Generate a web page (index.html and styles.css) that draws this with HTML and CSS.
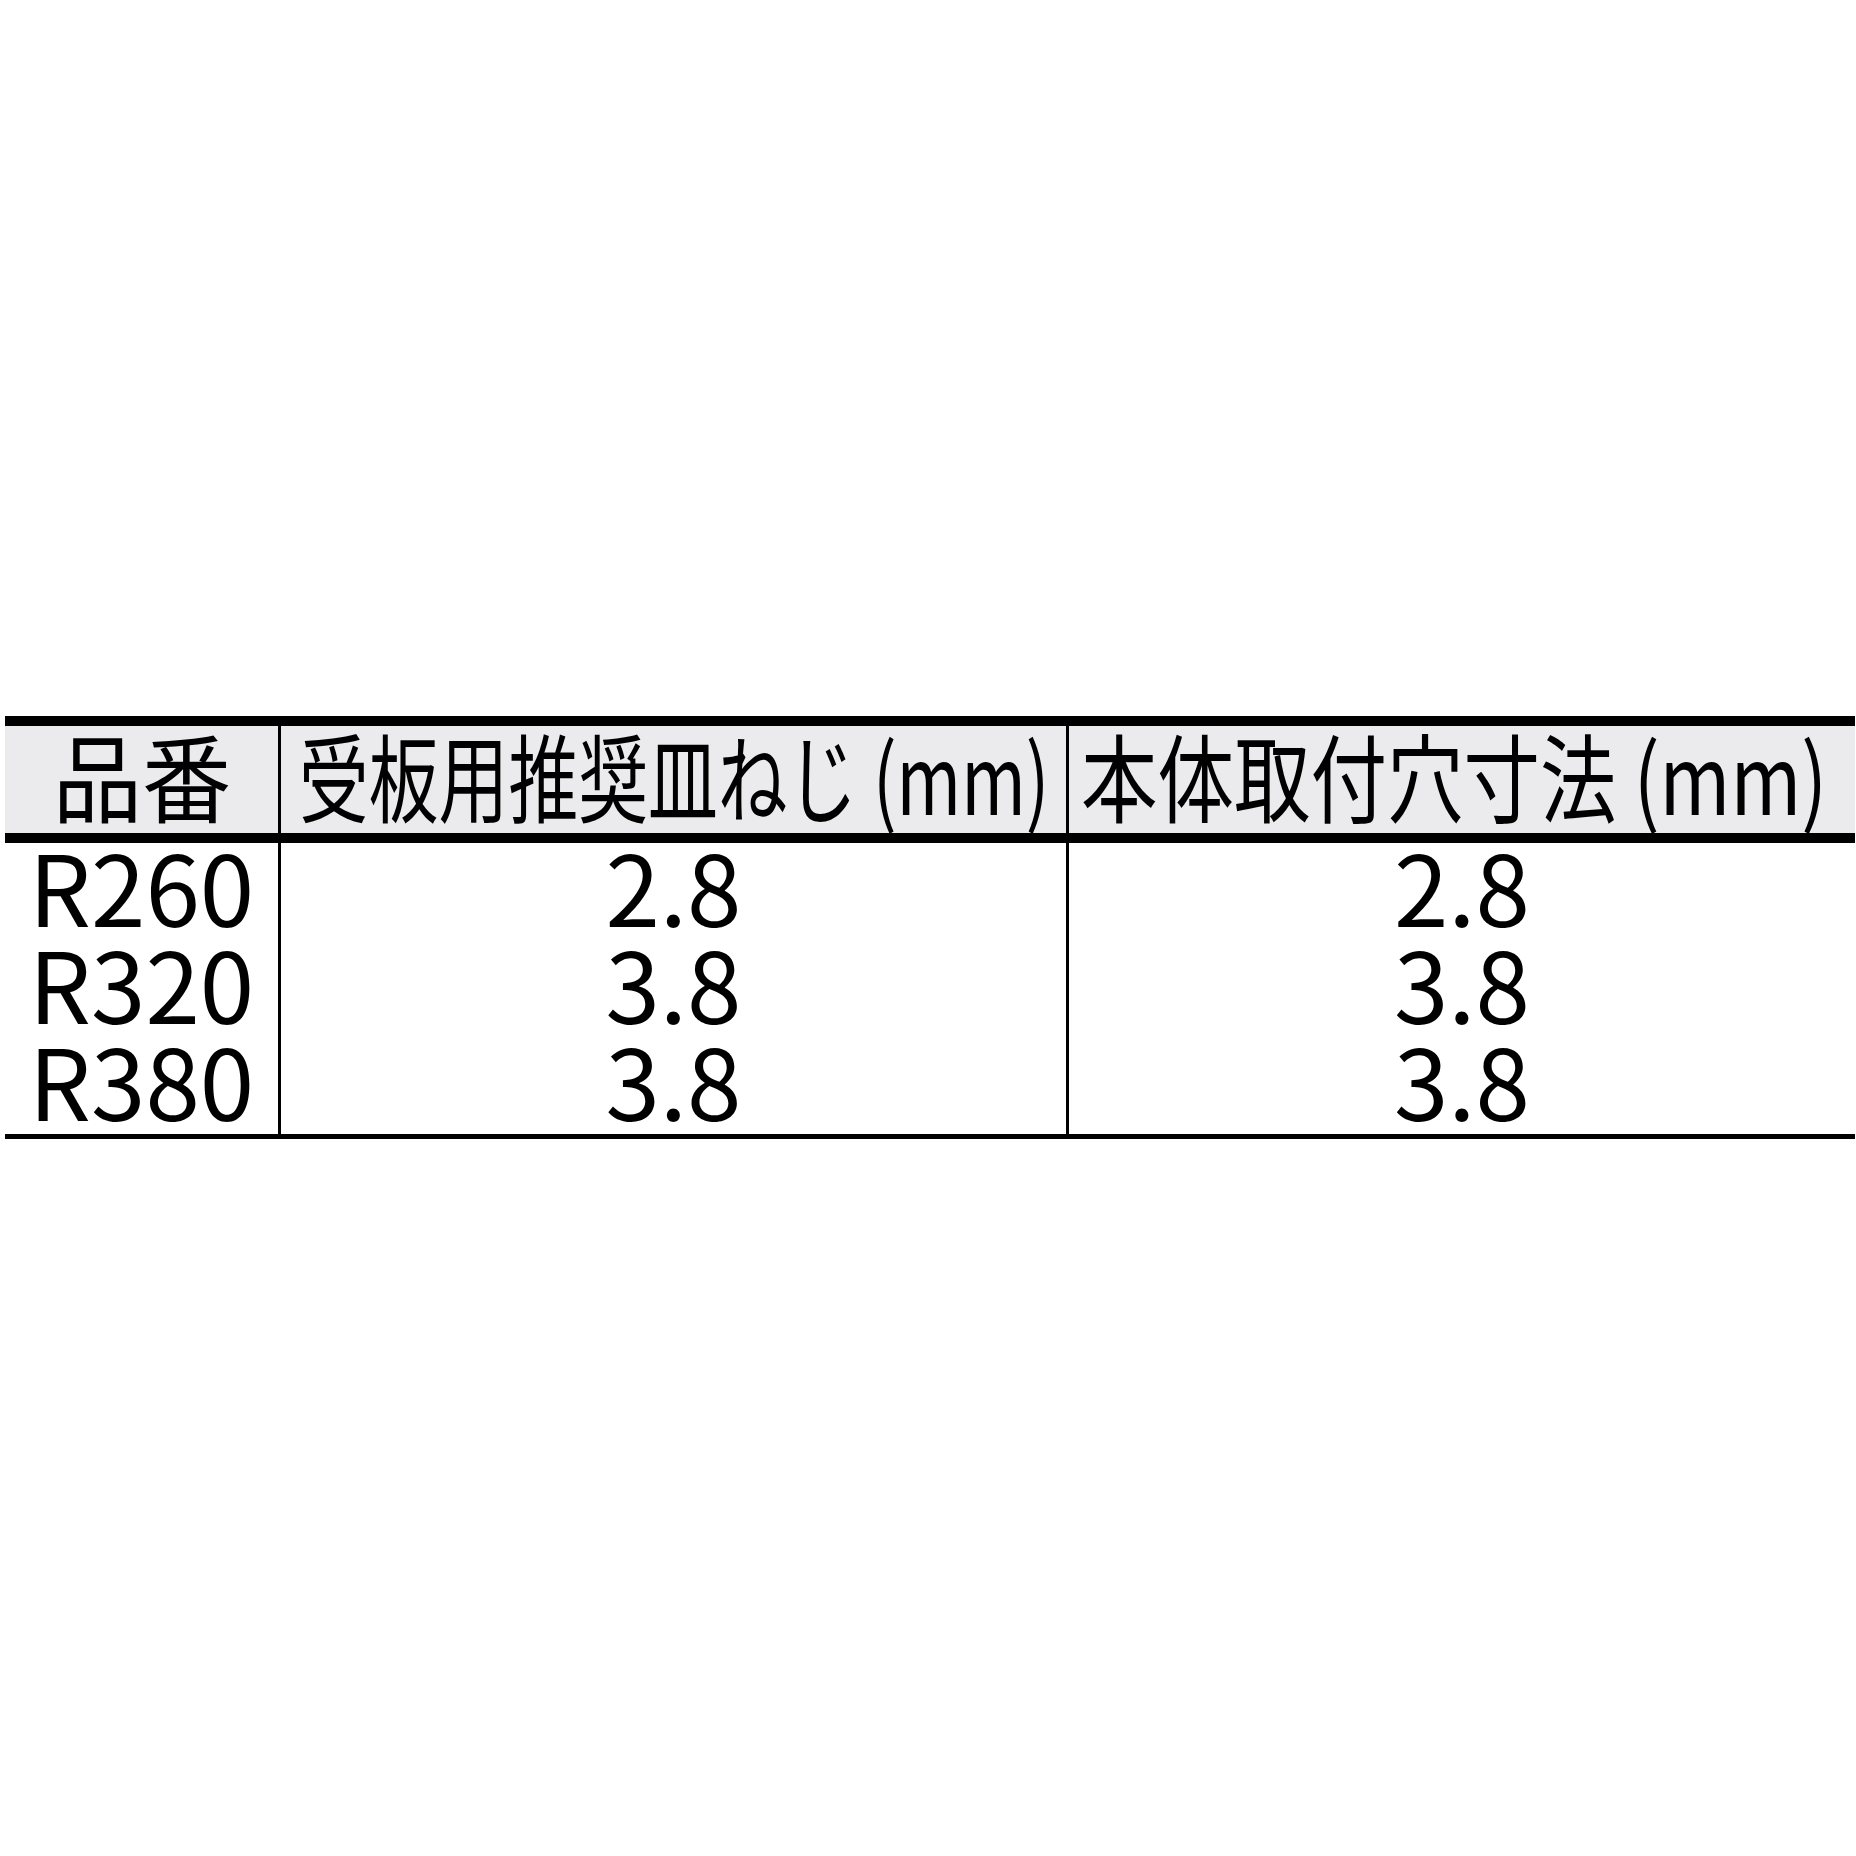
FILE: index.html
```html
<!DOCTYPE html>
<html lang="ja">
<head>
<meta charset="utf-8">
<link rel="stylesheet" href="styles.css">
</head>
<body>
<table class="spec">
  <colgroup>
    <col class="c1">
    <col class="c2">
    <col class="c3">
  </colgroup>
  <thead>
    <tr>
      <th><div class="hcell center"><span class="fit f1">品番</span></div></th>
      <th class="div"><div class="hcell h2"><span class="fit f2">受板用推奨皿ねじ (mm)</span></div></th>
      <th class="div"><div class="hcell h3"><span class="fit f3">本体取付穴寸法 (mm)</span></div></th>
    </tr>
  </thead>
  <tbody>
    <tr><td>R260</td><td class="div">2.8</td><td class="div">2.8</td></tr>
    <tr><td>R320</td><td class="div">3.8</td><td class="div">3.8</td></tr>
    <tr><td>R380</td><td class="div">3.8</td><td class="div">3.8</td></tr>
  </tbody>
</table>
</body>
</html>
```
FILE: styles.css
```css
html, body {
  margin: 0;
  padding: 0;
  background: #ffffff;
}
body {
  font-family: "Noto Sans CJK JP", "Noto Sans", sans-serif;
  color: #000;
}
.spec {
  margin: 716px 0 0 5px;
  width: 1850px;
  border-collapse: separate;
  border-spacing: 0;
  table-layout: fixed;
  border-top: 10px solid #000;
  border-bottom: 5px solid #000;
}
.c1 { width: 273px; }
.c2 { width: 788px; }
.c3 { width: 789px; }
th, td {
  padding: 0;
  text-align: center;
  white-space: nowrap;
}
th {
  background: #ebebed;
  font-weight: 400;
  font-size: 96px;
  line-height: 95px;
  padding-bottom: 12px;
  border-bottom: 10px solid #000;
}
td {
  font-size: 98px;
  line-height: 83px;
  padding-bottom: 14px;
}
.div {
  border-left: 3px solid #000;
}
.hcell {
  display: flex;
  justify-content: flex-start;
}
.hcell.center {
  justify-content: center;
}
.h2 { padding-left: 18px; }
.h3 { padding-left: 12px; }
.fit {
  display: inline-block;
  flex-shrink: 0;
  white-space: pre;
  transform-origin: left center;
}
.center .fit { transform-origin: center center; }
.f1 { transform: scaleX(0.93); }
.f2 { transform: scaleX(0.727); }
.f3 { transform: scaleX(0.797); }
```
